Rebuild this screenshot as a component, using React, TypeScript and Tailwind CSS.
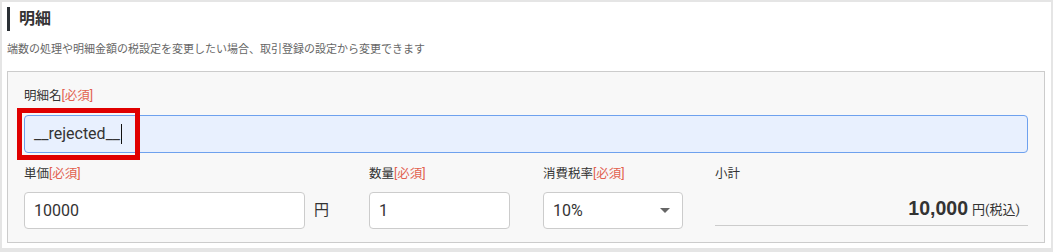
const FONT = "font-['Roboto','Noto_Sans_CJK_JP',sans-serif]";

function Required() {
  return <span className="text-[#e2614f]">[必須]</span>;
}

function Label({ children }: { children: React.ReactNode }) {
  return <div className="h-[16px] text-[12.5px] leading-[16px] text-[#333]">{children}</div>;
}

export default function App() {
  return (
    <div className={`${FONT} w-[1053px] h-[252px] bg-[#e5e5e5] pt-[2px] px-[2px]`}>
      <div className="h-[246px] bg-white px-[5px] pt-[5px]">
        {/* Section heading */}
        <div className="flex items-center h-[24px]">
          <div className="w-[3px] h-[24px] bg-[#2b3035]" />
          <h2 className="ml-[9px] text-[16px] font-bold text-[#333]">明細</h2>
        </div>
        <p className="mt-[11px] text-[11px] leading-[16px] text-[#666]">
          端数の処理や明細金額の税設定を変更したい場合、取引登録の設定から変更できます
        </p>

        {/* Line item box */}
        <div className="mt-[13px] w-[1038px] h-[172px] border border-[#ccc] bg-[#f8f8f8] pl-[16px] pt-[16px]">
          <Label>
            明細名<Required />
          </Label>
          <div className="relative mt-[11px]">
            <div className="flex items-center w-[1004px] h-[38px] rounded-[4px] border border-[#6ea1ee] bg-[#e8f0fe] pl-[9px] text-[16px] text-[#333]">
              <span>__rejected__</span>
              <span className="ml-[1px] w-[1px] h-[20px] bg-[#111]" />
            </div>
            {/* annotation frame */}
            <div className="absolute left-[-7px] top-[-7px] w-[123px] h-[52px] border-[5px] border-[#e00000]" />
          </div>

          <div className="flex mt-[13px]">
            <div className="w-[345px]">
              <Label>
                単価<Required />
              </Label>
              <div className="flex items-center mt-[10px]">
                <div className="flex items-center w-[281px] h-[37px] rounded-[4px] border border-[#ccc] bg-white pl-[9px] text-[16px] text-[#333]">
                  10000
                </div>
                <span className="ml-[9px] text-[15px] text-[#333]">円</span>
              </div>
            </div>
            <div className="w-[174px]">
              <Label>
                数量<Required />
              </Label>
              <div className="flex items-center mt-[10px] w-[141px] h-[37px] rounded-[4px] border border-[#ccc] bg-white pl-[9px] text-[16px] text-[#333]">
                1
              </div>
            </div>
            <div className="w-[172px]">
              <Label>
                消費税率<Required />
              </Label>
              <div className="flex items-center justify-between mt-[10px] w-[140px] h-[37px] rounded-[4px] border border-[#ccc] bg-white pl-[9px] pr-[12px] text-[16px] text-[#333]">
                <span>10%</span>
                <span className="w-0 h-0 border-x-[5px] border-x-transparent border-t-[5px] border-t-[#666]" />
              </div>
            </div>
            <div className="w-[313px]">
              <Label>小計</Label>
              <div className="flex items-center justify-end mt-[10px] h-[34px] border-b border-[#ccc] pr-[8px] text-[#333]">
                <span className="text-[19.5px] font-bold font-['Liberation_Sans',sans-serif]">10,000</span>
                <span className="ml-[4px] text-[13px] mt-[3px]">円(税込)</span>
              </div>
            </div>
          </div>
        </div>
      </div>
    </div>
  );
}
